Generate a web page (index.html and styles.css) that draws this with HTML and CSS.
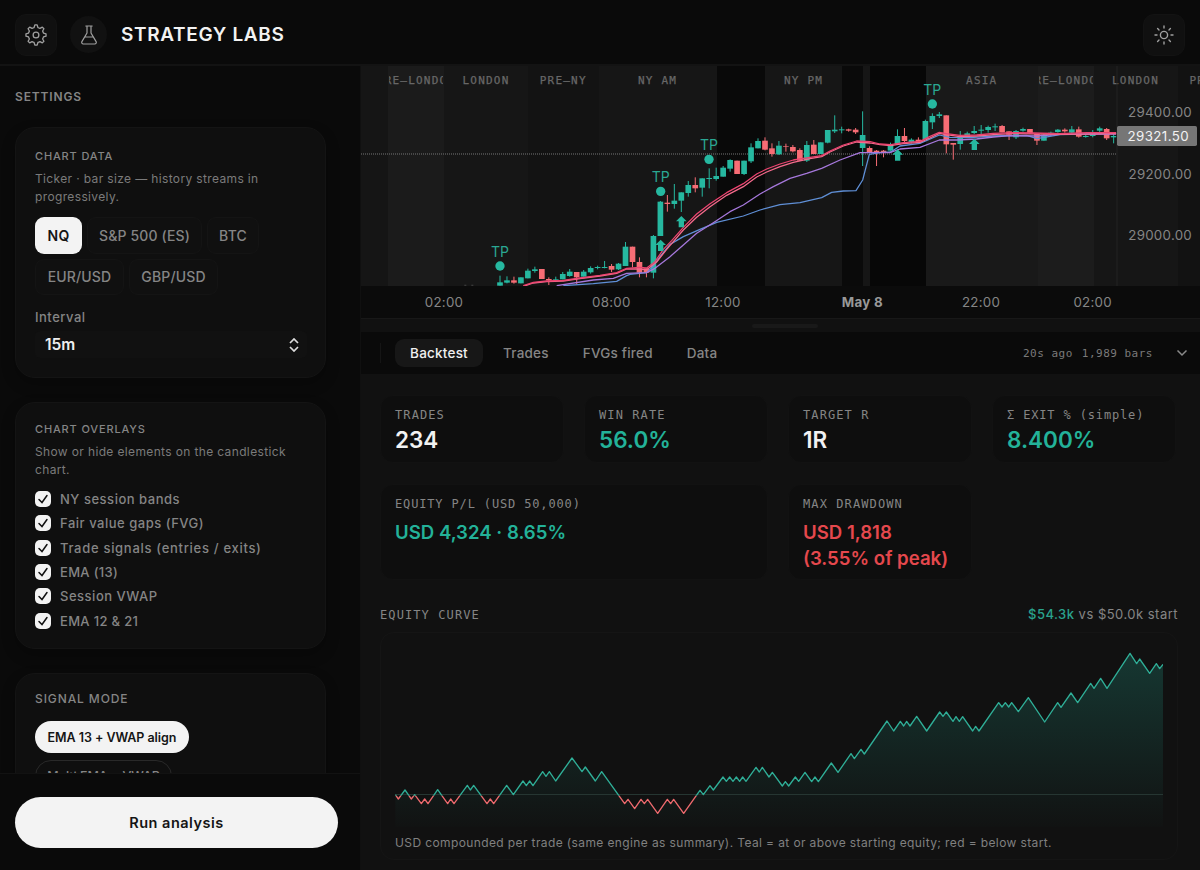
FILE: index.html
```html
<!DOCTYPE html>
<html lang="en">
<head>
<meta charset="utf-8">
<title>Strategy Labs</title>
<link rel="stylesheet" href="styles.css">
</head>
<body>
<div class="app">
  <header class="header">
    <button class="icon-btn" aria-label="Settings">
      <svg width="22" height="22" viewBox="1.700 1.700 20.600 20.600" class="ico"><path d="M10.200 5 10.900 2.600h2.200L13.800 5a7.300 7.300 0 0 1 1.900.8l2.200-1.200 1.500 1.500-1.200 2.200a7.300 7.300 0 0 1 .8 1.900l2.400.7v2.200l-2.400.7a7.300 7.300 0 0 1-.8 1.900l1.200 2.200-1.500 1.500-2.200-1.200a7.300 7.300 0 0 1-1.900.8l-.7 2.400h-2.200l-.7-2.400a7.300 7.300 0 0 1-1.900-.8l-2.200 1.200-1.500-1.500 1.200-2.200a7.300 7.300 0 0 1-.8-1.900l-2.400-.7v-2.200l2.400-.7a7.300 7.300 0 0 1 .8-1.900L4.600 6.100l1.500-1.500 2.200 1.200a7.300 7.300 0 0 1 1.900-.8z"/><circle cx="12" cy="12" r="2.700"/></svg>
    </button>
    <span class="logo">
      <svg width="20" height="20" viewBox="0 0 20 20" class="ico"><path d="M6.800 1h6.400M8 1v7L2.900 16.600a1.600 1.600 0 0 0 1.400 2.400h11.400a1.600 1.600 0 0 0 1.400-2.400L12 8V1M5.900 12h8.200"/></svg>
    </span>
    <h1 class="title">STRATEGY LABS</h1>
    <button class="icon-btn theme" aria-label="Theme">
      <svg width="20" height="20" viewBox="0 0 20 20" class="ico sun"><circle cx="10" cy="10" r="3.600"/><path d="M10 1v2M10 17v2M1 10h2M17 10h2M3.600 3.600l1.400 1.400M15 15l1.400 1.400M3.600 16.400l1.400-1.400M15 5l1.400-1.400"/></svg>
    </button>
  </header>

  <aside class="sidebar">
    <div class="scroll">
      <h2 class="side-title">SETTINGS</h2>
      <section class="card data-card">
        <h3 class="card-title">CHART DATA</h3>
        <p class="hint">Ticker · bar size — history streams in<br>progressively.</p>
        <div class="chips">
          <button class="chip on c-nq">NQ</button><button class="chip c-es">S&amp;P 500 (ES)</button><button class="chip c-btc">BTC</button>
          <button class="chip c-fx">EUR/USD</button><button class="chip c-fx">GBP/USD</button>
        </div>
        <div class="field-label">Interval</div>
        <div class="select"><span>15m</span>
          <svg width="12" height="14" viewBox="0 0 12 14"><path d="M2 5l4-4 4 4M2 9l4 4 4-4"/></svg>
        </div>
      </section>
      <section class="card overlay-card">
        <h3 class="card-title">CHART OVERLAYS</h3>
        <p class="hint">Show or hide elements on the candlestick<br>chart.</p>
        <ul class="checks">
          <li><i class="box"><svg viewBox="0 0 16 16"><path d="M4 8.500l3 3L12 4.500"/></svg></i><span class="k1">NY session bands</span></li>
          <li><i class="box"><svg viewBox="0 0 16 16"><path d="M4 8.500l3 3L12 4.500"/></svg></i><span class="k1">Fair value gaps (FVG)</span></li>
          <li><i class="box"><svg viewBox="0 0 16 16"><path d="M4 8.500l3 3L12 4.500"/></svg></i><span class="k3">Trade signals (entries / exits)</span></li>
          <li><i class="box"><svg viewBox="0 0 16 16"><path d="M4 8.500l3 3L12 4.500"/></svg></i><span>EMA (13)</span></li>
          <li><i class="box"><svg viewBox="0 0 16 16"><path d="M4 8.500l3 3L12 4.500"/></svg></i><span class="k1">Session VWAP</span></li>
          <li><i class="box"><svg viewBox="0 0 16 16"><path d="M4 8.500l3 3L12 4.500"/></svg></i><span>EMA 12 &amp; 21</span></li>
        </ul>
      </section>
      <section class="card mode-card">
        <h3 class="card-title wide">SIGNAL MODE</h3>
        <button class="pill on">EMA 13 + VWAP align</button>
        <button class="pill second">Multi EMA + VWAP</button>
      </section>
    </div>
    <div class="run"><button class="run-btn">Run analysis</button></div>
  </aside>

  <main class="main">
    <section class="chart">
      <div class="bands" id="bands"></div>
      <div class="time-axis"></div>
      <svg class="plot" id="plot" viewBox="3 18 2517 756" width="839" height="252"></svg>
    </section>
    <div class="splitter"><i></i></div>
    <nav class="tabs">
      <i class="tab-div"></i>
      <a class="tab active">Backtest</a><a class="tab t2">Trades</a><a class="tab t3">FVGs fired</a><a class="tab t4">Data</a>
      <span class="status"><span>20s ago</span><span>1,989 bars</span></span>
      <svg class="chev" width="12" height="8" viewBox="0 0 12 8"><path d="M1.500 1.500L6 6l4.500-4.500"/></svg>
    </nav>
    <section class="report">
      <div class="stats">
        <div class="stat"><div class="lab">TRADES</div><div class="val">234</div></div>
        <div class="stat"><div class="lab">WIN RATE</div><div class="val teal">56.0%</div></div>
        <div class="stat"><div class="lab">TARGET R</div><div class="val">1R</div></div>
        <div class="stat"><div class="lab tight">Σ EXIT % (simple)</div><div class="val teal">8.400%</div></div>
        <div class="stat span2"><div class="lab tight">EQUITY P/L (USD 50,000)</div><div class="val sm teal">USD 4,324 · 8.65%</div></div>
        <div class="stat"><div class="lab">MAX DRAWDOWN</div><div class="val sm red">USD 1,818<br>(3.55% of peak)</div></div>
      </div>
      <div class="curve-head"><span class="lab">EQUITY CURVE</span><span class="vs"><b>$54.3k</b> vs $50.0k start</span></div>
      <div class="curve">
        <svg id="equity" width="768" height="182" viewBox="75 135 2304 546"></svg>
        <p class="caption">USD compounded per trade (same engine as summary). Teal = at or above starting equity; red = below start.</p>
      </div>
    </section>
  </main>
</div>
<script src="charts.js"></script>
</body>
</html>
```
FILE: charts.js
```js
// Session bands: [label, width in px, background]
const bands = [
  ['', 27, '#151515'], ['PRE–LONDON', 56, '#1b1b1b'], ['LONDON', 84, '#161616'],
  ['PRE–NY', 70.5, '#131313'], ['NY AM', 118, '#161616'], ['', 48.5, '#090909'],
  ['NY PM', 77, '#161616'], ['', 20.5, '#0a0a0a'], ['', 7, '#161616'], ['', 56, '#070707'],
  ['ASIA', 112.5, '#191919'], ['PRE–LONDON', 55.5, '#1c1c1c'],
  ['LONDON', 84, '#161616'], ['PRE–NY', 71, '#121212']
];
document.getElementById('bands').innerHTML = bands.map(([t, w, c]) =>
  `<div class="band" style="width:${w}px;background:${c}"><span>${t}</span></div>`).join('');

// Candles: up flag, body top, body bottom, high, low (plot units, 3 per px)
const candles = [
  [1,667,677,647,677],[1,661,668,649,670],[0,661,668,650,671],[1,652,670,652,670],[1,632,655,626,655],
  [1,628,633,620,638],[0,627,657,627,657],[0,657,661,652,675],[1,658,661,650,662],[1,642,658,636,658],
  [1,635,648,627,650],[0,636,652,636,672],[1,635,650,630,650],[1,624,637,619,641],[1,621,624,617,628],
  [1,621,624,603,625],[0,618,629,612,636],[1,611,628,609,630],[1,560,618,546,618],[0,560,606,560,622],
  [0,606,638,592,652],[0,625,638,625,652],[1,528,638,525,655],[1,425,528,423,528],[0,428,432,405,455],
  [1,422,432,372,446],[1,397,422,397,456],[1,375,399,363,410],[0,375,385,352,397],[1,355,383,355,410],
  [1,354,357,325,385],[1,348,357,323,362],[1,323,350,318,350],[1,300,326,298,335],[0,302,342,302,342],
  [1,302,342,302,345],[1,262,304,250,309],[1,243,265,235,265],[0,242,269,232,271],[0,265,282,250,290],
  [1,257,283,243,285],[0,259,261,251,275],[0,261,274,255,277],[0,270,302,265,302],[1,255,302,243,306],
  [0,254,282,240,282],[1,247,282,247,282],[1,210,248,210,250],[1,209,214,166,219],[1,208,211,200,220],
  [0,208,212,206,215],[0,209,217,204,222],[1,225,264,154,318],[0,264,276,259,278],[0,272,278,270,318],
  [0,272,277,270,292],[1,253,272,248,272],[1,228,253,208,253],[0,228,243,204,248],[1,239,247,235,250],
  [0,239,244,232,249],[1,183,238,179,238],[1,168,187,160,207],[1,163,168,156,174],[0,166,253,166,280],
  [0,249,254,249,299],[1,229,252,213,269],[1,220,229,215,233],[1,213,219,198,222],[1,209,212,195,224],
  [1,201,210,197,218],[1,199,202,191,213],[0,198,217,195,217],[0,214,224,214,240],[1,213,232,210,237],
  [1,207,212,203,215],[0,207,220,207,222],[0,222,242,222,255],[1,224,242,222,242],[1,218,221,215,228],
  [1,209,216,207,218],[0,209,214,205,218],[1,208,218,198,222],[0,208,230,200,233],[1,228,231,223,233],
  [1,216,228,210,232],[1,205,212,200,216],[0,207,235,204,240],[1,228,232,220,250]
];
const UP = '#26b8a0', DOWN = '#f76d75';
let s = '<clipPath id="pane"><rect x="3" y="18" width="2267" height="660"/></clipPath>';
s += '<path class="crosshair" d="M3 282H2270"/><g clip-path="url(#pane)">';
candles.forEach(([up, t, b, h, l], i) => {
  const x = 420 + i * 20.92, c = up ? UP : DOWN;
  s += `<path stroke="${c}" stroke-width="3" d="M${x} ${h}V${l}"/><rect fill="${c}" x="${x - 8.5}" y="${t}" width="17" height="${b - t}"/>`;
});
const lines = [
  ['#5f8fd6', '610,677 700,671 770,664 800,647 810,643 860,638 880,618 900,590 930,553 970,530 1020,508 1070,487 1150,468 1200,450 1260,434 1320,428 1385,413 1415,397 1450,393 1488,392 1508,360 1528,283 1560,278 1592,276 1620,258 1680,250 1738,225 1770,232 1830,233 1900,228 2000,226 2031,236 2100,224 2269,220'],
  ['#a678dc', '590,677 700,660 760,655 800,640 860,638 885,625 930,590 970,555 1010,520 1060,488 1110,455 1150,435 1200,402 1240,380 1290,355 1340,340 1385,325 1440,300 1500,278 1590,278 1620,267 1680,262 1738,240 1790,240 1850,237 1900,231 1950,227 2030,228 2100,223 2269,222'],
  ['#f56a8c', '490,679 520,669 560,665 610,663 660,656 720,648 770,640 800,627 838,627 860,629 890,606 920,568 970,510 1010,472 1050,440 1100,406 1150,380 1190,351 1220,336 1260,320 1300,307 1350,296 1385,290 1410,276 1450,258 1490,246 1530,249 1560,254 1592,257 1630,251 1680,247 1710,234 1738,220 1759,224 1800,230 1850,228 1910,223 1960,221 2100,223 2269,221'],
  ['#ec4470', '490,677 520,667 560,663 610,661 660,654 720,646 770,638 800,625 838,622 860,624 885,605 910,568 935,542 970,502 1010,462 1050,431 1100,398 1150,371 1190,342 1220,327 1260,312 1300,300 1350,292 1385,287 1410,273 1450,255 1490,243 1530,245 1560,252 1592,254 1630,248 1680,244 1710,229 1738,217 1759,221 1800,226 1850,225 1900,220 1960,218 2020,219 2100,221 2180,218 2269,218']
];
lines.forEach(([c, p]) => { s += `<polyline class="ma" stroke="${c}" points="${p}"/>`; });
s += '</g>';
[[902,539],[964,468],[1613,268],[1843,236]].forEach(([x, y]) => {
  s += `<path fill="${UP}" d="M${x} ${y}l16 16h-8v18h-16v-18h-8z"/>`;
});
[[420,618],[902,394],[1047,298],[1717,132]].forEach(([x, y]) => {
  s += `<circle fill="${UP}" cx="${x}" cy="${y}" r="14"/><text class="tp" x="${x}" y="${y - 27}">TP</text>`;
});
s += '<path fill="#444" d="M313 674h6v3h-6zM334 674h6v3h-6z"/><path class="scale-line" d="M2271 18V678"/>';
s += '<rect x="2271" y="198" width="240" height="60" rx="5" fill="#767676"/>';
[[171,'29400.00'],[357,'29200.00'],[540,'29000.00']].forEach(([y, t]) => {
  s += `<text class="ax price" x="2496" y="${y}">${t}</text>`;
});
s += '<text class="ax price now" x="2487" y="244">29321.50</text>';
[[252,'02:00'],[754,'08:00'],[1089,'12:00'],[1507,'May 8'],[1863,'22:00'],[2198,'02:00']].forEach(([x, t]) => {
  s += `<text class="ax time${t === 'May 8' ? ' day' : ''}" x="${x}" y="742">${t}</text>`;
});
document.getElementById('plot').innerHTML = s;

// Equity curve turning points
const eq = '76,584 85,597 105,570 124,597 134,584 154,611 164,597 174,611 203,569 233,611 242,597 252,611 292,556 301,570 311,556 351,611 361,597 371,611 410,556 430,584 459,543 469,557 479,543 489,557 518,515 528,529 538,515 557,543 606,474 636,515 646,501 676,543 695,515 764,611 774,598 794,626 813,598 823,611 833,598 863,640 892,598 902,611 911,598 941,640 990,571 1000,584 1020,557 1030,570 1059,531 1069,544 1079,531 1089,544 1099,531 1109,544 1118,531 1128,544 1158,502 1168,516 1177,502 1197,531 1207,517 1237,558 1246,545 1256,558 1276,531 1286,544 1305,517 1325,545 1335,531 1345,545 1384,489 1404,517 1443,461 1453,476 1473,448 1483,462 1551,363 1571,393 1591,364 1601,378 1610,364 1620,378 1640,349 1670,393 1709,336 1719,349 1729,336 1749,364 1758,350 1768,364 1778,350 1808,393 1817,379 1827,393 1886,308 1896,321 1906,308 1916,321 1925,308 1945,335 1975,293 2024,366 2063,308 2073,322 2103,279 2123,308 2162,250 2172,265 2192,235 2211,265 2280,160 2300,191 2309,177 2339,220 2359,191 2369,206 2379,193';
document.getElementById('equity').innerHTML = `
<linearGradient id="fade" gradientUnits="userSpaceOnUse" x1="0" y1="160" x2="0" y2="680"><stop offset="0" stop-color="#26b8a0" stop-opacity=".23"/><stop offset="1" stop-color="#26b8a0" stop-opacity=".01"/></linearGradient>
<clipPath id="above"><rect x="70" y="100" width="2320" height="487"/></clipPath>
<clipPath id="below"><rect x="70" y="587" width="2320" height="100"/></clipPath>
<polygon fill="url(#fade)" points="${eq} 2379,680 76,680"/>
<path d="M76 583.500H2379" class="base"/>
<polyline class="eq" stroke="#2fae97" clip-path="url(#above)" points="${eq}"/>
<polyline class="eq" stroke="#ee6a6e" clip-path="url(#below)" points="${eq}"/>`;
```
FILE: styles.css
```css
* { box-sizing: border-box; }
body { margin: 0; background: #0a0a0a; color: #858585; font-family: Inter, "Liberation Sans", sans-serif; overflow: hidden; }
h1, h2, h3, p, ul { margin: 0; padding: 0; font-weight: 500; }
button { font: inherit; color: inherit; border: 0; padding: 0; background: none; }
.app { width: 1200px; height: 870px; display: grid; grid-template-columns: 361px 839px; grid-template-rows: 66px 804px; overflow: hidden; }

.header { grid-column: 1 / 3; display: flex; align-items: center; padding: 5px 15px 0; border-bottom: 2px solid #131313; }
.icon-btn { width: 42px; height: 42px; border-radius: 11px; background: #101010; border: 1px solid #131313; display: grid; place-items: center; }
.logo { width: 37px; height: 37px; margin-left: 13px; border-radius: 50%; background: #111; display: grid; place-items: center; }
.ico { fill: none; stroke: #a0a0a0; stroke-width: 1.2; stroke-linecap: round; stroke-linejoin: round; display: block; }
.sun { stroke-width: 1.4; }
.title { margin-left: 14px; font-size: 19px; font-weight: 600; letter-spacing: .65px; color: #f2f2f2; line-height: 24px; }
.theme { margin-left: auto; }

.sidebar { display: flex; flex-direction: column; min-height: 0; border-right: 1px solid #101010; }
.scroll { flex: 1; min-height: 0; overflow: hidden; padding: 23px 34px 0 15px; }
.side-title { font-size: 12px; line-height: 16px; letter-spacing: .85px; height: 38px; font-weight: 600; }
.card { background: #0f0f0f; border: 1px solid #141414; border-radius: 20px; padding: 19px; box-shadow: 0 6px 14px rgba(0,0,0,.25); }
.data-card { height: 251px; margin-bottom: 24px; padding-top: 20px; }
.overlay-card { height: 247px; margin-bottom: 24px; padding-top: 18px; }
.mode-card { height: 250px; padding-top: 17px; }
.card-title { font-size: 11px; line-height: 16px; letter-spacing: .85px; }
.card-title.wide { font-size: 12px; letter-spacing: .9px; }
.hint { font-size: 12px; line-height: 17.5px; letter-spacing: .36px; color: #7b7b7b; font-weight: 400; margin-top: 6px; }
.chips { display: flex; flex-wrap: wrap; gap: 5px; margin-top: 12px; }
.chip { height: 36.5px; border-radius: 9px; background: #101010; border: 1px solid #141414; font-size: 14px; letter-spacing: .15px; font-weight: 500; text-align: center; }
.chip.on { background: #f3f3f3; color: #151515; border: 0; font-weight: 600; }
.c-nq { width: 47px; } .c-es { width: 115px; } .c-btc { width: 52px; } .c-fx { width: 89px; }
.field-label { font-size: 13px; line-height: 16px; letter-spacing: .5px; font-weight: 500; margin-top: 14px; }
.select { margin: 6px 0 0; height: 27px; width: 272px; padding: 0 7px 0 10px; border-radius: 5px; background: #111; display: flex; align-items: center; justify-content: space-between; color: #eee; font-size: 15.500px; font-weight: 600; }
.select svg path { fill: none; stroke: #ddd; stroke-width: 1.7; }
.checks { list-style: none; margin-top: 9px; display: grid; grid-auto-rows: 24.3px; }
.checks li { display: flex; align-items: center; gap: 9px; font-size: 13px; letter-spacing: .33px; font-weight: 500; }
.k1 { letter-spacing: .52px; } .k3 { letter-spacing: .7px; }
.box { width: 16px; height: 16px; border-radius: 5px; background: #f3f3f3; display: block; }
.box svg { display: block; }
.box path { fill: none; stroke: #111; stroke-width: 1.5; stroke-linecap: round; }
.pill { display: block; height: 32px; width: 154px; border-radius: 17px; font-size: 12.5px; font-weight: 600; margin-top: 14px; letter-spacing: -.05px; }
.pill.on { background: #f3f3f3; color: #151515; }
.pill.second { width: 137px; margin-top: 7px; border: 1px solid #292929; font-weight: 500; }
.run { height: 97px; border-top: 1px solid #121212; padding: 23px 22px 0 15px; }
.run-btn { width: 323px; height: 51px; border-radius: 26px; background: #f3f3f3; color: #151515; font-size: 14.5px; font-weight: 600; letter-spacing: .5px; }

.main { display: flex; flex-direction: column; background: #111; min-width: 0; }
.chart { position: relative; height: 252px; overflow: hidden; }
.bands { display: flex; height: 220px; }
.band { flex: none; height: 220px; padding: 7px 1px 0; overflow: hidden; display: flex; justify-content: center; }
.band span { font: 400 11px/16px "DejaVu Sans Mono", monospace; letter-spacing: 1.2px; color: #676767; -webkit-text-stroke: .25px #676767; white-space: nowrap; flex: none; }
.band { overflow: clip; overflow-clip-margin: content-box; }
.time-axis { height: 32px; background: #0b0b0b; }
.plot { position: absolute; left: 0; top: 0; }
.crosshair { stroke: #777; stroke-width: 3; stroke-dasharray: 3 3; fill: none; }
.ma { fill: none; stroke-width: 3.800; stroke-linejoin: round; }
.scale-line { stroke: #222; stroke-width: 3; }
.tp { font-size: 42px; text-anchor: middle; fill: #2aa893; }
.ax { font-size: 40px; fill: #858585; }
.price { text-anchor: end; letter-spacing: .8px; }
.now { fill: #f2f2f2; letter-spacing: 1.2px; }
.time { text-anchor: middle; letter-spacing: .8px; }
.day { font-weight: 700; fill: #999; }
.splitter { height: 14px; border-top: 1px solid #181818; display: grid; place-items: center; padding: 0 0 0 8px; }
.splitter i { width: 66px; height: 4px; border-radius: 2px; background: #191919; }

.tabs { height: 42px; background: #0a0a0a; display: flex; align-items: center; padding: 0 12px 0 19px; font-size: 13.5px; font-weight: 500; letter-spacing: .22px; }
.tab-div { width: 1px; height: 20px; background: #151515; margin-right: 14px; }
.tab { line-height: 28px; }
.tab.active { width: 88px; text-align: center; border-radius: 9px; background: #171717; color: #f0f0f0; }
.t2 { margin-left: 20px; } .t3 { margin-left: 34px; } .t4 { margin-left: 34px; }
.status { margin-left: auto; display: flex; gap: 9px; font: 400 11px "DejaVu Sans Mono", monospace; letter-spacing: .5px; color: #7a7a7a; }
.chev { margin-left: 23px; fill: none; stroke: #8a8a8a; stroke-width: 1.500; }

.report { padding: 21px 22px 0 19px; flex: 1; }
.stats { display: grid; grid-template-columns: repeat(4, 184px); grid-template-rows: 68px 96px; gap: 21px 20px; }
.stat { border-radius: 13px; background: #0e0e0e; border: 1px solid #121212; padding: 11px 14px 0; }
.span2 { grid-column: span 2; }
.lab { font: 400 12px/16px "DejaVu Sans Mono", monospace; letter-spacing: 1.1px; color: #858585; white-space: nowrap; }
.lab.tight { letter-spacing: .85px; }
.val { font-size: 22.500px; line-height: 30px; font-weight: 600; color: #f2f2f2; margin-top: 2px; }
.val.sm { font-size: 18.600px; line-height: 26px; margin-top: 7px; white-space: nowrap; }
.val.teal { color: #23b299; } .val.red { color: #e5484d; }
.curve-head { display: flex; justify-content: space-between; align-items: center; height: 18px; margin-top: 25px; }
.curve-head .lab { padding-top: 2px; }
.vs { font-size: 13px; letter-spacing: .48px; } .vs b { color: #2aa38d; font-weight: 500; }
.curve { height: 228px; margin-top: 9px; border: 1px solid #151515; border-radius: 14px; padding: 12px 14px 0; }
.curve svg { display: block; }
.base { stroke: #263632; stroke-width: 3; }
.eq { fill: none; stroke-width: 4; stroke-linejoin: round; }
.caption { font-size: 12px; line-height: 16px; margin-top: 8px; letter-spacing: .385px; white-space: nowrap; font-weight: 400; color: #808080; }
```
